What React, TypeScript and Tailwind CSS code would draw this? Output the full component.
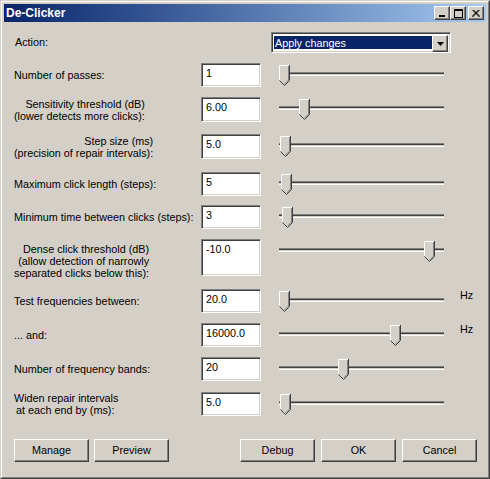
import React from 'react';

interface Row {
    label: React.ReactNode;
    value: string;
    thumb: number;
    mt: string;
    h: string;
    labelPad?: string;
    hz?: boolean;
}

const raised = 'bg-[#d4d0c8] border border-t-white border-l-white border-r-[#404040] border-b-[#404040] shadow-[inset_-1px_-1px_0_#808080]';
const sunken = 'border border-t-[#808080] border-l-[#808080] border-r-white border-b-white shadow-[inset_1px_1px_0_#404040,inset_-1px_-1px_0_#d4d0c8]';

const rows: Row[] = [
    { label: 'Number of passes:', value: '1', thumb: 0, mt: 'mt-[10px]', h: 'h-[24px]' },
    {
        label: (
            <div className="inline-block text-right leading-[12px]">
                Sensitivity threshold (dB)<br />(lower detects more clicks):
            </div>
        ),
        value: '6.00', thumb: 20, mt: 'mt-[10px]', h: 'h-[25px]',
    },
    {
        label: (
            <div className="inline-block text-right leading-[12px]">
                Step size (ms)<br />(precision of repair intervals):
            </div>
        ),
        value: '5.0', thumb: 1, mt: 'mt-[12px]', h: 'h-[25px]',
    },
    { label: 'Maximum click length (steps):', value: '5', thumb: 2, mt: 'mt-[13px]', h: 'h-[24px]' },
    { label: 'Minimum time between clicks (steps):', value: '3', thumb: 3, mt: 'mt-[9px]', h: 'h-[24px]' },
    {
        label: (
            <div className="inline-block text-right leading-[12px]">
                Dense click threshold (dB)<br />(allow detection of narrowly<br />separated clicks below this):
            </div>
        ),
        value: '-10.0', thumb: 145, mt: 'mt-[10px]', h: 'h-[37px]', labelPad: 'pt-[6px]',
    },
    { label: 'Test frequencies between:', value: '20.0', thumb: 0, mt: 'mt-[13px]', h: 'h-[24px]', hz: true },
    { label: '... and:', value: '16000.0', thumb: 111, mt: 'mt-[10px]', h: 'h-[24px]', hz: true },
    { label: 'Number of frequency bands:', value: '20', thumb: 59, mt: 'mt-[10px]', h: 'h-[24px]' },
    {
        label: (
            <div className="inline-block text-left leading-[12px]">
                Widen repair intervals<br /><span className="pl-[2px]">at each end by (ms):</span>
            </div>
        ),
        value: '5.0', thumb: 1, mt: 'mt-[11px]', h: 'h-[24px]',
    },
];

const Thumb = () => (
    <svg width="11" height="21" viewBox="0 0 11 21" className="block">
        <polygon points="0,0 11,0 11,15 5.5,20.5 0,15" fill="#d4d0c8" />
        <polyline points="0.5,15 0.5,0.5 10,0.5" fill="none" stroke="#ffffff" strokeWidth="1" />
        <polyline points="10.5,0 10.5,15.5 5.5,20.5 0.5,15.5" fill="none" stroke="#404040" strokeWidth="1" />
        <polyline points="9.5,1 9.5,15 5.5,19" fill="none" stroke="#808080" strokeWidth="1" />
    </svg>
);

const Slider = ({ offset }: { offset: number }) => (
    <div className="relative w-[165px] h-[21px] mt-[2px]">
        <div className="absolute left-0 right-0 top-[7px] h-[4px] border-t border-t-[#808080] border-b border-b-white">
            <div className="h-[1px] bg-[#404040]" />
        </div>
        <div className="absolute top-0" style={{ left: offset }}>
            <Thumb />
        </div>
    </div>
);

const TitleButton = ({ children }: { children: React.ReactNode }) => (
    <div className={`w-[16px] h-[14px] flex items-center justify-center ${raised}`}>{children}</div>
);

const Button = ({ children }: { children: React.ReactNode }) => (
    <button className={`w-[75px] h-[23px] text-[10.8px] text-black ${raised}`}>{children}</button>
);

export default function App() {
    return (
        <div className="w-[490px] h-[479px] border border-t-[#d4d0c8] border-l-[#d4d0c8] border-r-[#404040] border-b-[#404040] font-['Liberation_Sans',Arial,sans-serif] text-[10.8px] text-black">
            <div className="w-full h-full bg-[#d4d0c8] border border-t-white border-l-white border-r-[#808080] border-b-[#808080] p-[2px]">
                {/* title bar */}
                <div className="h-[18px] flex items-center bg-gradient-to-r from-[#0a246a] to-[#a6caf0] pl-[2px] pr-[2px]">
                    <span className="text-white font-bold text-[12px] flex-1">De-Clicker</span>
                    <TitleButton>
                        <svg width="8" height="7" viewBox="0 0 8 7"><rect x="1" y="5" width="6" height="2" fill="#000" /></svg>
                    </TitleButton>
                    <TitleButton>
                        <svg width="9" height="9" viewBox="0 0 9 9"><rect x="0.5" y="0.5" width="8" height="8" fill="none" stroke="#000" /><rect x="0" y="1" width="9" height="1" fill="#000" /></svg>
                    </TitleButton>
                    <div className="w-[2px]" />
                    <TitleButton>
                        <svg width="8" height="7" viewBox="0 0 8 7"><path d="M0.5 0 L7.5 7 M1.5 0 L8 6.5 M7.5 0 L0.5 7 M6.5 0 L0 6.5" stroke="#000" strokeWidth="1" /></svg>
                    </TitleButton>
                </div>

                <div className="pl-[10px]">
                    {/* action */}
                    <div className="flex items-center h-[21px] mt-[10px]">
                        <div className="w-[257px] pl-[1px]">Action:</div>
                        <div className={`w-[180px] h-[21px] bg-white p-[2px] flex ${sunken}`}>
                            <div className="flex-1 bg-[#0a246a] text-white pl-[1px] leading-[15px] mt-[1px] mb-[1px]">Apply changes</div>
                            <div className={`w-[16px] h-[17px] flex items-center justify-center ${raised}`}>
                                <svg width="7" height="4" viewBox="0 0 7 4"><polygon points="0,0 7,0 3.5,4" fill="#000" /></svg>
                            </div>
                        </div>
                    </div>

                    {rows.map((r, i) => (
                        <div key={i} className={`flex items-start ${r.mt} ${r.h}`}>
                            <div className={`w-[187px] h-full flex items-center ${r.labelPad ?? ''}`}>{r.label}</div>
                            <div className={`w-[60px] h-full bg-white pl-[4px] pt-[3px] leading-[13px] ${sunken}`}>{r.value}</div>
                            <div className="ml-[18px]">
                                <Slider offset={r.thumb} />
                            </div>
                            {r.hz && <div className="ml-[16px] leading-[13px]">Hz</div>}
                        </div>
                    ))}

                    {/* buttons */}
                    <div className="flex mt-[23px]">
                        <Button>Manage</Button>
                        <div className="w-[5px]" />
                        <Button>Preview</Button>
                        <div className="w-[71px]" />
                        <Button>Debug</Button>
                        <div className="w-[6px]" />
                        <Button>OK</Button>
                        <div className="w-[6px]" />
                        <Button>Cancel</Button>
                    </div>
                </div>
            </div>
        </div>
    );
}
